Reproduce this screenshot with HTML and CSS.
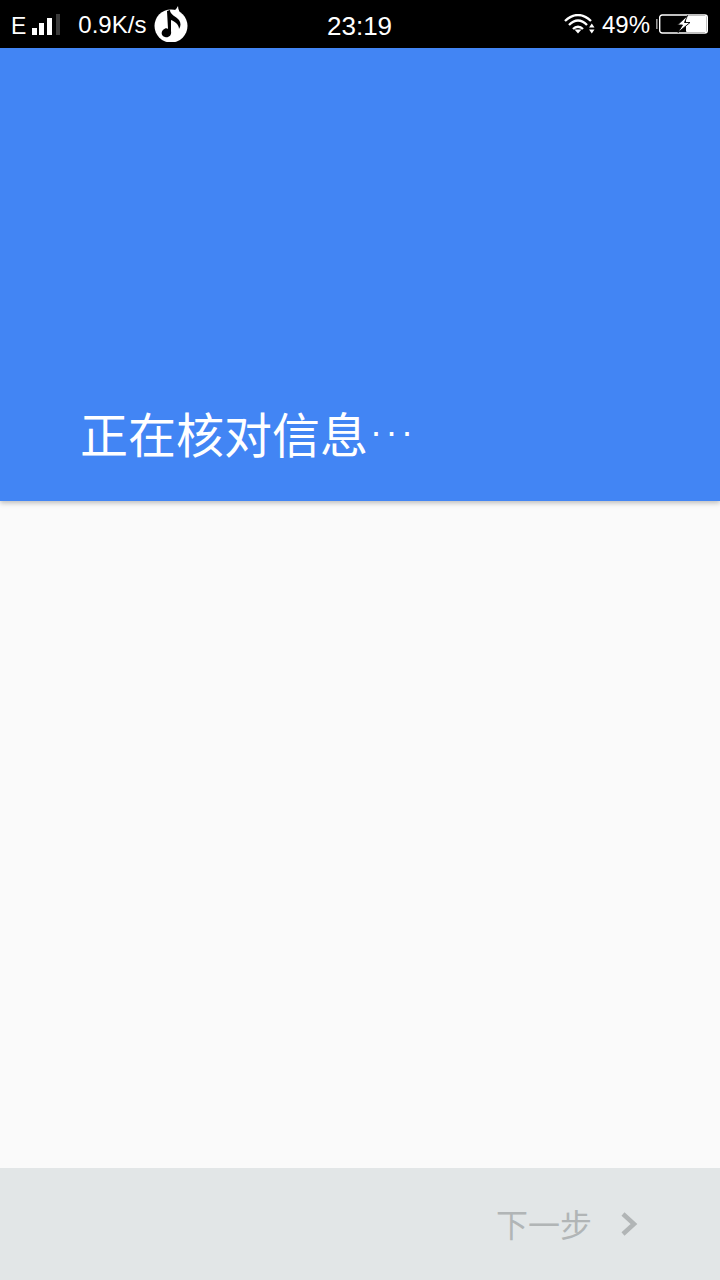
FILE: index.html
```html
<!DOCTYPE html>
<html lang="zh">
<head>
    <meta charset="UTF-8">
    <meta name="viewport" content="width=device-width, initial-scale=1.0">
    <title>正在核对信息</title>
    <link rel="stylesheet" href="styles.css">
</head>
<body>
    <div class="status-bar">
        <div class="status-left">
            <span class="net-type">E</span>
            <svg class="signal" width="30" height="24" viewBox="0 0 30 24">
                <rect x="0" y="15" width="5" height="7" fill="#fff"/>
                <rect x="7" y="10" width="5" height="12" fill="#fff"/>
                <rect x="15" y="5" width="5" height="17" fill="#fff"/>
                <rect x="24" y="1" width="4" height="21" fill="#3a3a3a"/>
            </svg>
            <span class="speed">0.9K/s</span>
            <svg class="music" width="34" height="36" viewBox="0 0 34 36">
                <circle cx="17" cy="20" r="16.5" fill="#fff"/>
                <path d="M15 7 C19 6 22 4 24 0 C24 4 26 7 29 10 L26 12 L20 8 Z" fill="#fff"/>
                <path d="M13 5 L16 4 C16 9 22 10 25 14 C27 17 27 20 25 23 C25 19 22 16 17 14 L17 25 C18 30 14 32 11 31 C7 30 7 26 9 24 C11 22 13 22 14 23 Z" fill="#000"/>
            </svg>
        </div>
        <div class="status-time">23:19</div>
        <div class="status-right">
            <svg class="wifi" width="32" height="22" viewBox="0 0 32 22">
                <g fill="none" stroke="#fff" stroke-width="2.3">
                    <path d="M1 7 C9 -1 19 -1 27 7"/>
                    <path d="M5 11 C11 5 17 5 23 11"/>
                    <path d="M9 15 C12 12 16 12 19 15"/>
                </g>
                <path d="M10.5 15.5 L17.5 15.5 L14 19.5 Z" fill="#fff"/>
                <path d="M25 13.5 L30.5 13.5 L27.8 9.5 Z M25 15.5 L30.5 15.5 L27.8 19.5 Z" fill="#fff"/>
            </svg>
            <span class="percent">49%</span>
            <svg class="battery" width="52" height="20" viewBox="0 0 52 20">
                <rect x="0" y="5" width="1.6" height="10" fill="#999"/>
                <rect x="3.7" y="1" width="47.6" height="18" rx="2.5" fill="#000" stroke="#fff" stroke-width="1.4"/>
                <rect x="30" y="2" width="20.6" height="16" rx="1" fill="#fff"/>
                <path d="M31.5 1.5 L21.5 11 L26.5 11 L22 18.5 L34 8.5 L28.5 8.5 Z" fill="#fff" stroke="#000" stroke-width="0.9"/>
            </svg>
        </div>
    </div>

    <header class="hero">
        <h1>正在核对信息<span class="dots">···</span></h1>
    </header>

    <main class="content"></main>

    <footer class="bottom-bar">
        <span class="next-text">下一步</span>
        <svg class="next-arrow" width="18" height="24" viewBox="0 0 18 24">
            <path d="M3 2 L14 12 L3 22" fill="none" stroke="#b1b5b6" stroke-width="4.5"/>
        </svg>
    </footer>
</body>
</html>
```

FILE: styles.css
```css
* {
    box-sizing: border-box;
}

body {
    margin: 0;
    width: 720px;
    height: 1280px;
    display: flex;
    flex-direction: column;
    font-family: "Noto Sans CJK SC", "Noto Sans", sans-serif;
    background: #fafafa;
    overflow: hidden;
}

.status-bar {
    height: 48px;
    flex: none;
    background: #000;
    color: #fff;
    display: flex;
    align-items: center;
    justify-content: space-between;
    position: relative;
    font-family: "Liberation Sans", sans-serif;
    font-size: 24px;
}

.status-left {
    display: flex;
    align-items: center;
    padding-left: 11px;
}

.net-type {
    font-size: 23px;
    margin-top: 5px;
}

.signal {
    margin-left: 6px;
    margin-top: 1px;
}

.speed {
    margin-left: 16px;
    margin-top: 1px;
}

.music {
    margin-left: 8px;
    margin-top: -1px;
}

.status-time {
    position: absolute;
    left: 327px;
    top: 10px;
    font-size: 26px;
    line-height: 32px;
}

.status-right {
    display: flex;
    align-items: center;
    padding-right: 12px;
}

.wifi {
    margin-top: 1px;
}

.percent {
    margin-left: 6px;
    margin-top: 1px;
}

.battery {
    margin-left: 6px;
}

.hero {
    height: 453px;
    flex: none;
    background: #4285f4;
    padding: 0 0 37px 80px;
    display: flex;
    align-items: flex-end;
    box-shadow: 0 2px 5px rgba(0, 0, 0, 0.25);
    position: relative;
}

.hero h1 {
    margin: 0;
    color: #fff;
    font-size: 48px;
    font-weight: 400;
    line-height: 64px;
}

.dots {
    display: inline-block;
    font-family: "Liberation Sans", sans-serif;
    font-size: 36px;
    line-height: 1;
    letter-spacing: 3.5px;
    margin-left: 2px;
    transform: translateY(-9px);
}

.content {
    flex: 1;
    background: #fafafa;
}

.bottom-bar {
    height: 112px;
    flex: none;
    background: #e2e6e7;
    display: flex;
    align-items: center;
    justify-content: flex-end;
    padding-right: 82px;
}

.next-text {
    color: #b1b5b6;
    font-size: 32px;
    font-weight: 400;
    margin-top: -3px;
}

.next-arrow {
    margin-left: 28px;
}
```
